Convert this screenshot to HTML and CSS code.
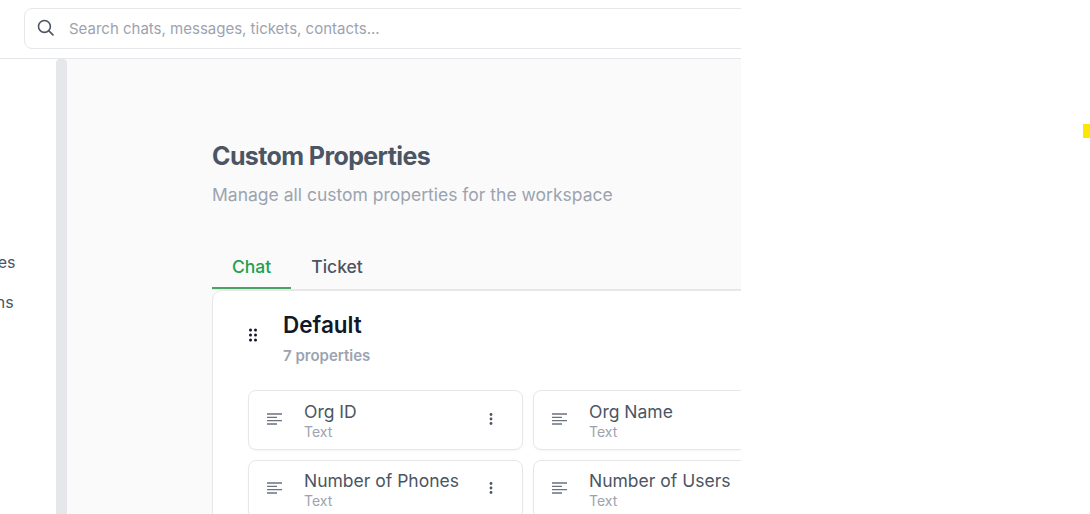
FILE: index.html
```html
<!DOCTYPE html>
<html lang="en">
<head>
    <meta charset="UTF-8">
    <meta name="viewport" content="width=device-width, initial-scale=1.0">
    <title>Custom Properties</title>
    <link rel="stylesheet" href="styles.css">
</head>
<body>
    <div class="app">
        <header class="topbar">
            <div class="search">
                <svg class="search-icon" viewBox="0 0 16 16" fill="none" stroke="#4b5563" stroke-width="1.5" stroke-linecap="round">
                    <circle cx="7" cy="7" r="5.6"/>
                    <path d="M11.2 11.2 15 15"/>
                </svg>
                <span class="search-text">Search chats, messages, tickets, contacts...</span>
            </div>
        </header>
        <div class="body-row">
            <nav class="sidebar">
                <div class="nav-item">Preferences</div>
                <div class="nav-item">Integrations</div>
            </nav>
            <div class="scrollbar"></div>
            <main class="main">
                <h1 class="title">Custom Properties</h1>
                <p class="subtitle">Manage all custom properties for the workspace</p>
                <div class="tabs">
                    <div class="tab active">Chat</div>
                    <div class="tab">Ticket</div>
                </div>
                <section class="group">
                    <div class="group-head">
                        <svg class="grip" viewBox="0 0 10 14" fill="#111827">
                            <circle cx="2.5" cy="2" r="1.5"/><circle cx="7.5" cy="2" r="1.5"/>
                            <circle cx="2.5" cy="7" r="1.5"/><circle cx="7.5" cy="7" r="1.5"/>
                            <circle cx="2.5" cy="12" r="1.5"/><circle cx="7.5" cy="12" r="1.5"/>
                        </svg>
                        <div>
                            <h2 class="group-title">Default</h2>
                            <div class="group-count">7 properties</div>
                        </div>
                    </div>
                    <div class="prop-grid">
                        <div class="prop">
                            <svg class="prop-icon" viewBox="0 0 16 12" stroke="#6b7280" stroke-width="1.3"><path d="M0 1h15M0 4.300h10M0 7.600h15M0 11h10"/></svg>
                            <div class="prop-text"><div class="prop-name">Org ID</div><div class="prop-type">Text</div></div>
                            <svg class="kebab" viewBox="0 0 4 12" fill="#4b5563"><circle cx="2" cy="1.500" r="1.400"/><circle cx="2" cy="6" r="1.400"/><circle cx="2" cy="10.500" r="1.400"/></svg>
                        </div>
                        <div class="prop">
                            <svg class="prop-icon" viewBox="0 0 16 12" stroke="#6b7280" stroke-width="1.3"><path d="M0 1h15M0 4.300h10M0 7.600h15M0 11h10"/></svg>
                            <div class="prop-text"><div class="prop-name">Org Name</div><div class="prop-type">Text</div></div>
                            <svg class="kebab" viewBox="0 0 4 12" fill="#4b5563"><circle cx="2" cy="1.500" r="1.400"/><circle cx="2" cy="6" r="1.400"/><circle cx="2" cy="10.500" r="1.400"/></svg>
                        </div>
                        <div class="prop">
                            <svg class="prop-icon" viewBox="0 0 16 12" stroke="#6b7280" stroke-width="1.3"><path d="M0 1h15M0 4.300h10M0 7.600h15M0 11h10"/></svg>
                            <div class="prop-text"><div class="prop-name">Number of Phones</div><div class="prop-type">Text</div></div>
                            <svg class="kebab" viewBox="0 0 4 12" fill="#4b5563"><circle cx="2" cy="1.500" r="1.400"/><circle cx="2" cy="6" r="1.400"/><circle cx="2" cy="10.500" r="1.400"/></svg>
                        </div>
                        <div class="prop">
                            <svg class="prop-icon" viewBox="0 0 16 12" stroke="#6b7280" stroke-width="1.3"><path d="M0 1h15M0 4.300h10M0 7.600h15M0 11h10"/></svg>
                            <div class="prop-text"><div class="prop-name">Number of Users</div><div class="prop-type">Text</div></div>
                            <svg class="kebab" viewBox="0 0 4 12" fill="#4b5563"><circle cx="2" cy="1.500" r="1.400"/><circle cx="2" cy="6" r="1.400"/><circle cx="2" cy="10.500" r="1.400"/></svg>
                        </div>
                    </div>
                </section>
            </main>
        </div>
    </div>
    <div class="yellow-mark"></div>
</body>
</html>
```

FILE: styles.css
```css
html, body {
    height: 100%;
}
body {
    margin: 0;
    background-color: #fff;
    font-family: Inter, "Liberation Sans", sans-serif;
    overflow: hidden;
}
.app {
    width: 741px;
    height: 514px;
    overflow: hidden;
    display: flex;
    flex-direction: column;
}
.topbar {
    box-sizing: border-box;
    flex: none;
    height: 59px;
    padding: 8px 0 0 24px;
    border-bottom: 1px solid #e5e7eb;
}
.search {
    box-sizing: border-box;
    width: 900px;
    height: 41px;
    display: flex;
    align-items: center;
    padding-left: 12px;
    border: 1px solid #e5e7eb;
    border-radius: 8px;
}
.search-icon {
    width: 17px;
    height: 17px;
    margin-top: -3px;
}
.search-text {
    margin-left: 15px;
    font-size: 15px;
    color: #9ca3af;
}
.body-row {
    flex: 1;
    display: flex;
    min-height: 0;
}
.sidebar {
    flex: none;
    width: 56px;
    overflow: hidden;
    padding-top: 190px;
    box-sizing: border-box;
}
.nav-item {
    margin-left: -76px;
    height: 40px;
    line-height: 27px;
    font-size: 16px;
    color: #4b5563;
    white-space: nowrap;
}
.scrollbar {
    flex: none;
    width: 11px;
    background-color: #e5e7eb;
    border-radius: 4px 4px 0 0;
}
.main {
    flex: 1;
    min-width: 0;
    padding: 81px 0 0 145px;
    background-color: #fafafa;
    overflow: hidden;
}
.title {
    margin: 0;
    font-size: 25px;
    line-height: 32px;
    font-weight: 700;
    letter-spacing: -0.6px;
    color: #4b5563;
}
.subtitle {
    margin: 9px 0 0;
    font-size: 17.5px;
    line-height: 28px;
    color: #9ca3af;
}
.tabs {
    display: flex;
    margin-top: 40px;
    border-bottom: 1px solid #e5e7eb;
    width: 900px;
}
.tab {
    padding: 0 20px;
    height: 40px;
    line-height: 36px;
    box-sizing: border-box;
    font-size: 17.5px;
    font-weight: 500;
    color: #4b5563;
}
.tab.active {
    color: #22a04f;
    border-bottom: 2px solid #4ba261;
}
.group {
    width: 900px;
    height: 400px;
    box-sizing: border-box;
    padding: 20px 35px;
    background-color: #fff;
    border: 1px solid #e5e7eb;
    border-radius: 10px 10px 0 0;
}
.group-head {
    display: flex;
    align-items: center;
    gap: 25px;
}
.grip {
    width: 10px;
    height: 14px;
    margin-bottom: 8px;
}
.group-title {
    margin: 0;
    font-size: 22.5px;
    line-height: 28px;
    font-weight: 600;
    color: #111827;
}
.group-count {
    margin-top: 6px;
    font-size: 15px;
    line-height: 22px;
    font-weight: 600;
    color: #9ca3af;
}
.prop-grid {
    display: grid;
    grid-template-columns: 275px 275px;
    gap: 10px;
    margin-top: 23px;
}
.prop {
    box-sizing: border-box;
    height: 59.5px;
    display: flex;
    align-items: center;
    padding: 0 29px 0 18px;
    border: 1px solid #e5e7eb;
    border-radius: 8px;
    box-shadow: 0 1px 2px rgba(0, 0, 0, 0.04);
}
.prop-icon {
    flex: none;
    width: 16px;
    height: 12px;
    margin-bottom: 2px;
}
.prop-text {
    flex: 1;
    margin-left: 21px;
    margin-top: 2px;
}
.prop-name {
    font-size: 17.5px;
    line-height: 22px;
    color: #4b5563;
}
.prop-type {
    font-size: 14px;
    line-height: 18px;
    color: #9ca3af;
}
.kebab {
    flex: none;
    width: 4px;
    height: 12px;
    margin-bottom: 2px;
}
.yellow-mark {
    position: absolute;
    top: 124px;
    right: 0;
    width: 7px;
    height: 14px;
    background-color: #ffe600;
}
```
